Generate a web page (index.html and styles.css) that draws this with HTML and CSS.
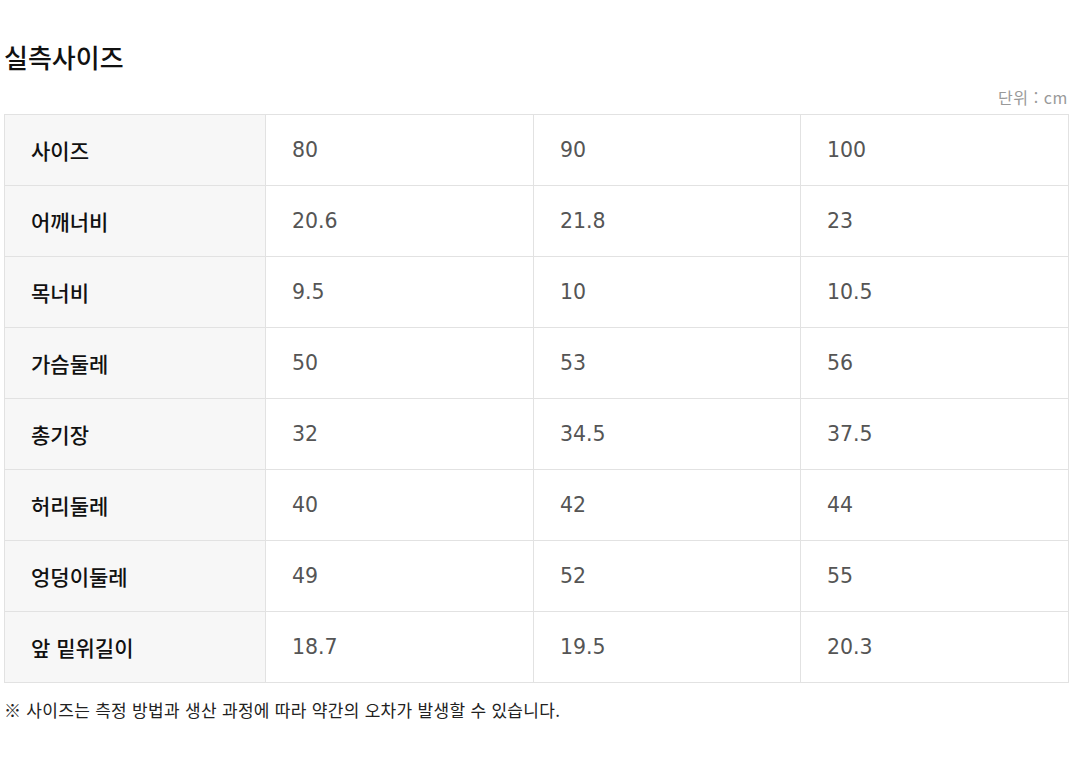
FILE: index.html
```html
<!DOCTYPE html>
<html lang="ko">
<head>
<meta charset="utf-8">
<link rel="stylesheet" href="styles.css">
</head>
<body>
<div class="wrap">
  <h2 class="title">실측사이즈</h2>
  <div class="unit">단위 : cm</div>
  <table class="size-table">
    <colgroup>
      <col class="c1"><col class="c2"><col class="c3"><col class="c4">
    </colgroup>
    <tbody>
      <tr><th>사이즈</th><td>80</td><td>90</td><td>100</td></tr>
      <tr><th>어깨너비</th><td>20.6</td><td>21.8</td><td>23</td></tr>
      <tr><th>목너비</th><td>9.5</td><td>10</td><td>10.5</td></tr>
      <tr><th>가슴둘레</th><td>50</td><td>53</td><td>56</td></tr>
      <tr><th>총기장</th><td>32</td><td>34.5</td><td>37.5</td></tr>
      <tr><th>허리둘레</th><td>40</td><td>42</td><td>44</td></tr>
      <tr><th>엉덩이둘레</th><td>49</td><td>52</td><td>55</td></tr>
      <tr><th>앞 밑위길이</th><td>18.7</td><td>19.5</td><td>20.3</td></tr>
    </tbody>
  </table>
  <p class="note">※ 사이즈는 측정 방법과 생산 과정에 따라 약간의 오차가 발생할 수 있습니다.</p>
</div>
</body>
</html>
```
FILE: styles.css
```css
html, body { margin: 0; padding: 0; background: #fff; }
body { font-family: "DejaVu Sans", "Noto Sans CJK KR", sans-serif; color: #111; }
.wrap { padding: 0 4px; }
.title {
  margin: 0;
  padding-top: 40px;
  font-family: "Noto Sans CJK KR", sans-serif;
  font-size: 26px;
  font-weight: 500;
  line-height: 34px;
  color: #111;
  letter-spacing: 0;
}
.unit {
  text-align: right;
  margin-top: 12px;
  font-family: "Noto Sans CJK KR", sans-serif;
  font-size: 16px;
  line-height: 22px;
  letter-spacing: 0.6px;
  color: #999;
  height: 28px;
}
.size-table {
  width: 1064px;
  border-collapse: collapse;
  table-layout: fixed;
}
.c1 { width: 261px; }
.c2 { width: 268px; }
.c3 { width: 267px; }
.c4 { width: 268px; }
.size-table th, .size-table td {
  height: 70px;
  border: 1px solid #e2e2e2;
  padding: 0 0 0 26px;
  text-align: left;
  vertical-align: middle;
}
.size-table th {
  background: #f7f7f7;
  font-family: "Noto Sans CJK KR", sans-serif;
  font-size: 21px;
  font-weight: 500;
  color: #111;
}
.size-table td {
  font-family: "DejaVu Sans", "Noto Sans CJK KR", sans-serif;
  font-size: 20.5px;
  color: #555;
}
.note {
  margin: 16px 0 0 0;
  font-family: "Noto Sans CJK KR", sans-serif;
  font-size: 17px;
  line-height: 22px;
  letter-spacing: 0.3px;
  color: #222;
}
```
